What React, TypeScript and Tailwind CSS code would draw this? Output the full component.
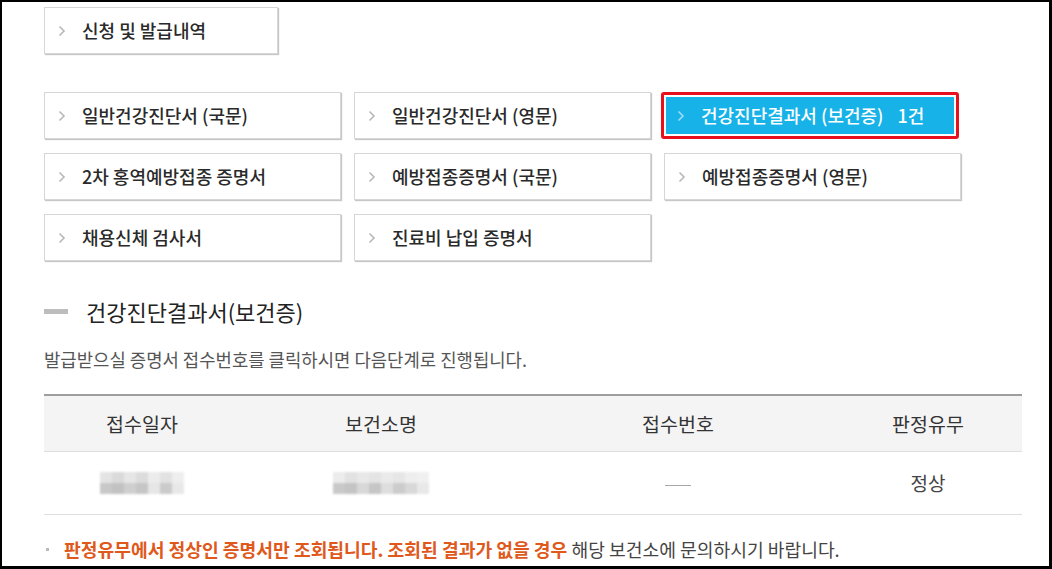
import React from "react";

const FONT = "font-['Noto_Sans_CJK_KR','Noto_Sans',sans-serif]";

function Chevron({ color = "#b8b8b8" }: { color?: string }) {
  return (
    <svg width="8" height="12" viewBox="0 0 8 12" className="shrink-0">
      <path d="M1.5 1.5 L6 6 L1.5 10.5" fill="none" stroke={color} strokeWidth="1.6" />
    </svg>
  );
}

function MenuButton({ label, className = "" }: { label: string; className?: string }) {
  return (
    <div
      className={`h-[47px] flex items-center pl-[13px] gap-[16px] bg-white border border-[#d6d6d6] shadow-[1px_1px_1px_rgba(0,0,0,0.22)] text-[18px] font-medium text-[#2a2a2a] ${className}`}
    >
      <Chevron />
      <span>{label}</span>
    </div>
  );
}

function Mosaic({ cells }: { cells: string[][] }) {
  return (
    <div className="flex flex-col blur-[1.2px]">
      {cells.map((row, i) => (
        <div key={i} className="flex">
          {row.map((c, j) => (
            <div key={j} className="w-[12px] h-[11px]" style={{ background: c }} />
          ))}
        </div>
      ))}
    </div>
  );
}

export default function App() {
  const rows = [
    ["일반건강진단서 (국문)", "일반건강진단서 (영문)", null],
    ["2차 홍역예방접종 증명서", "예방접종증명서 (국문)", "예방접종증명서 (영문)"],
    ["채용신체 검사서", "진료비 납입 증명서"],
  ];

  return (
    <div className={`w-[1052px] h-[569px] overflow-hidden bg-black pl-[2px] pt-[2px] pr-[3px] pb-[3px] ${FONT}`}>
      <div className="w-full h-full bg-white pl-[42px] pt-[5px] overflow-hidden">
        <MenuButton label="신청 및 발급내역" className="w-[234px] h-[46px]" />

        <div className="mt-[38px] grid grid-cols-[297px_297px_297px] gap-x-[13px] gap-y-[14px]">
          {rows.map((row, i) =>
            row.map((label, j) =>
              label === null ? (
                <div
                  key={`${i}-${j}`}
                  className="-ml-[3px] w-[298px] h-[47px] border-[3px] border-[#e8101c] rounded-[3px] p-[2px] bg-white"
                >
                  <div className="h-full bg-[#17b2e8] flex items-center pl-[11px] gap-[16px] text-[18px] font-medium text-white">
                    <Chevron color="#9ddcf3" />
                    <span>
                      건강진단결과서 (보건증)
                      <span className="ml-[14px]">1건</span>
                    </span>
                  </div>
                </div>
              ) : (
                <MenuButton key={`${i}-${j}`} label={label} />
              )
            )
          )}
        </div>

        <div className="mt-[36px] flex items-center gap-[18px] h-[28px]">
          <div className="w-[24px] h-[5px] bg-[#bdbdbd]" />
          <h2 className="text-[22px] text-[#222] leading-[28px]">건강진단결과서(보건증)</h2>
        </div>

        <p className="mt-[22px] text-[17.8px] leading-[24px] text-[#555]">
          발급받으실 증명서 접수번호를 클릭하시면 다음단계로 진행됩니다.
        </p>

        <div className="mt-[23px] w-[978px] border-t-[2px] border-[#9e9e9e]">
          <div className="grid grid-cols-[196px_282px_312px_188px] h-[56px] items-center bg-[#f4f4f4] border-b border-[#dedede] text-[19.5px] text-[#333] text-center">
            <div>접수일자</div>
            <div>보건소명</div>
            <div>접수번호</div>
            <div>판정유무</div>
          </div>
          <div className="grid grid-cols-[196px_282px_312px_188px] h-[63px] items-center border-b border-[#dedede] text-[19px] text-[#444] text-center">
            <div className="flex justify-center">
              <Mosaic
                cells={[
                  ["#e4e4e4", "#dadada", "#e6e6e6", "#dcdcdc", "#ececec", "#e2e2e2", "#eeeeee"],
                  ["#c8c8c8", "#c2c2c2", "#cfcfcf", "#c6c6c6", "#e6e6e6", "#cbcbcb", "#e8e8e8"],
                ]}
              />
            </div>
            <div className="flex justify-center">
              <Mosaic
                cells={[
                  ["#ececec", "#e2e2e2", "#e8e8e8", "#e4e4e4", "#eaeaea", "#e6e6e6", "#eeeeee", "#f0f0f0"],
                  ["#c9c9c9", "#c4c4c4", "#d8d8d8", "#c6c6c6", "#dedede", "#cccccc", "#d8d8d8", "#e8e8e8"],
                ]}
              />
            </div>
            <div className="flex justify-center pt-[4px]">
              <div className="w-[26px] h-[1px] bg-[#a8a8a8]" />
            </div>
            <div>정상</div>
          </div>
        </div>

        <div className="mt-[22px] flex items-center text-[18.2px] leading-[24px]">
          <div className="w-[3px] h-[3px] bg-[#bbb] ml-[2px] mr-[15px]" />
          <p className="text-[#444] whitespace-nowrap">
            <span className="font-bold text-[#e0591c]">
              판정유무에서 정상인 증명서만 조회됩니다. 조회된 결과가 없을 경우
            </span>{" "}
            해당 보건소에 문의하시기 바랍니다.
          </p>
        </div>
      </div>
    </div>
  );
}
